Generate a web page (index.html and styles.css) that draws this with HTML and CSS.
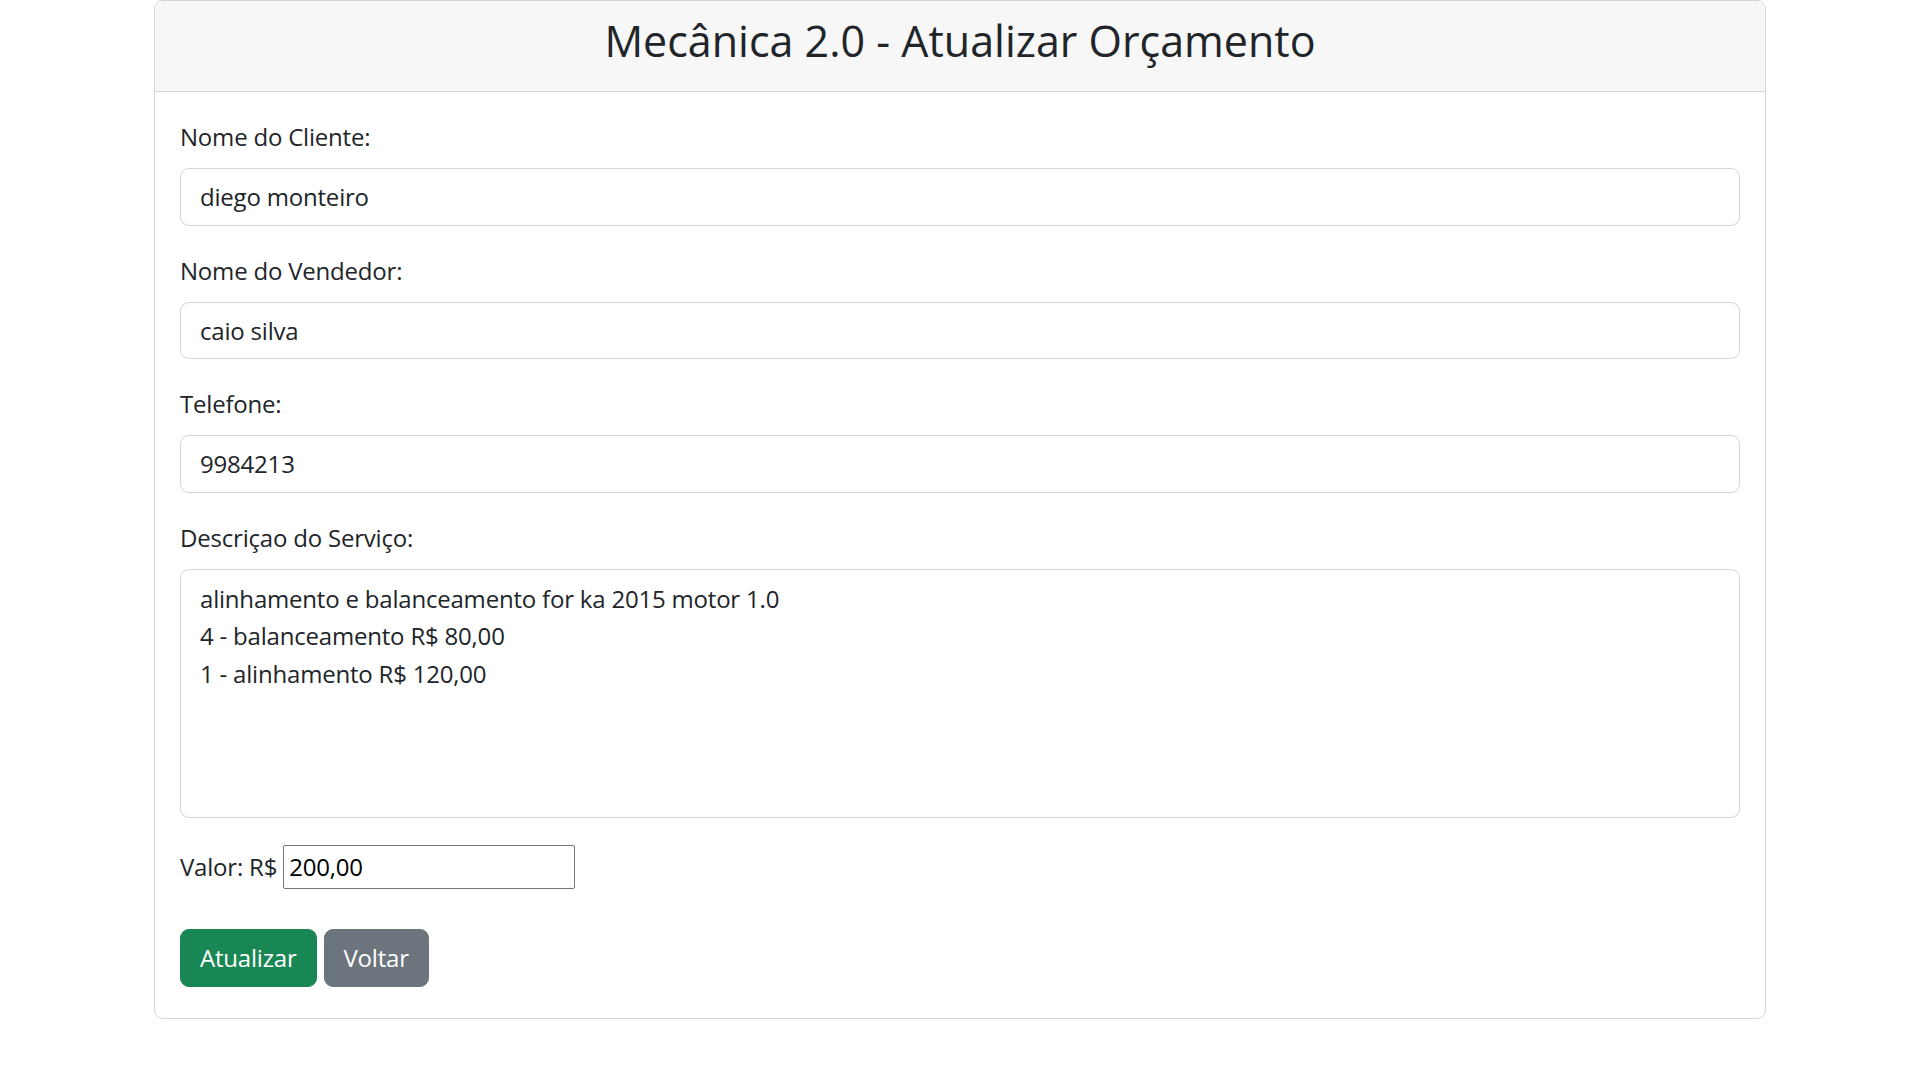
FILE: index.html
```html
<!DOCTYPE html>
<html lang="pt-BR">
<head>
<meta charset="utf-8">
<title>Mecânica 2.0 - Atualizar Orçamento</title>
<link rel="stylesheet" href="styles.css">
</head>
<body>
<div class="card">
  <div class="card-header">
    <h1 class="title">Mecânica 2.0 - Atualizar Orçamento</h1>
  </div>
  <form class="card-body">
    <div class="field">
      <label class="form-label" for="cliente">Nome do Cliente:</label>
      <input class="form-control" id="cliente" type="text" value="diego monteiro">
    </div>
    <div class="field">
      <label class="form-label" for="vendedor">Nome do Vendedor:</label>
      <input class="form-control" id="vendedor" type="text" value="caio silva">
    </div>
    <div class="field">
      <label class="form-label" for="telefone">Telefone:</label>
      <input class="form-control" id="telefone" type="text" value="9984213">
    </div>
    <div class="field">
      <label class="form-label" for="descricao">Descriçao do Serviço:</label>
      <textarea class="form-control textarea" id="descricao">alinhamento e balanceamento for ka 2015 motor 1.0
4 - balanceamento R$ 80,00
1 - alinhamento R$ 120,00</textarea>
    </div>
    <div class="valor-row">
      <label class="valor-label" for="valor">Valor: R$</label>
      <input class="valor-input" id="valor" type="text" value="200,00">
    </div>
    <div class="actions">
      <button type="button" class="btn btn-success">Atualizar</button>
      <button type="button" class="btn btn-secondary">Voltar</button>
    </div>
  </form>
</div>
</body>
</html>
```
FILE: styles.css
```css
html, body {
  margin: 0;
  padding: 0;
  background: #ffffff;
}

body {
  font-family: "Open Sans", "Noto Sans", sans-serif;
  color: #212529;
  font-size: 24px;
  line-height: 36px;
  letter-spacing: -0.2px;
}

.card {
  width: 1612px;
  margin: 0 auto;
  box-sizing: border-box;
  border: 1px solid #d4d4d4;
  border-radius: 9px;
  overflow: hidden;
  background: #ffffff;
}

.card-header {
  background: #f7f7f7;
  border-bottom: 1px solid #d4d4d4;
  padding: 14px 24px 24px;
}

.title {
  margin: 0;
  font-size: 43px;
  line-height: 52px;
  font-weight: 500;
  letter-spacing: 0;
  text-align: center;
  color: #212529;
}

.card-body {
  display: flex;
  flex-direction: column;
  padding: 27px 25px 31px;
}

.field {
  display: flex;
  flex-direction: column;
  margin-bottom: 27px;
}

.form-label {
  font-size: 24px;
  line-height: 36px;
  margin-bottom: 13px;
}

.form-control {
  box-sizing: border-box;
  width: 100%;
  height: 57.5px;
  padding: 9px 19px;
  font-family: "Open Sans", "Noto Sans", sans-serif;
  font-size: 24px;
  line-height: 36px;
  letter-spacing: -0.2px;
  color: #212529;
  background: #ffffff;
  border: 1px solid #d3d6da;
  border-radius: 9px;
  outline: none;
}

.textarea {
  height: 249px;
  padding: 10px 19px 9px;
  line-height: 37.5px;
  resize: none;
  display: block;
  overflow: hidden;
}

.valor-row {
  display: flex;
  align-items: center;
  gap: 6px;
  height: 44px;
}

.valor-label {
  font-size: 24px;
  line-height: 36px;
}

.valor-input {
  box-sizing: border-box;
  width: 292px;
  height: 44px;
  padding: 0 5px;
  font-family: "Open Sans", "Noto Sans", sans-serif;
  font-size: 24px;
  letter-spacing: -0.2px;
  color: #000000;
  border: 1px solid #767676;
  border-radius: 2px;
  outline: none;
}

.actions {
  display: flex;
  gap: 7px;
  margin-top: 40px;
}

.btn {
  font-family: "Open Sans", "Noto Sans", sans-serif;
  font-size: 24px;
  line-height: 36px;
  letter-spacing: -0.2px;
  padding: 10px 19px;
  border: 1px solid transparent;
  border-radius: 9px;
  color: #ffffff;
  cursor: pointer;
}

.btn-success {
  background: #198754;
  border-color: #198754;
}

.btn-secondary {
  background: #6c757d;
  border-color: #6c757d;
}
```
